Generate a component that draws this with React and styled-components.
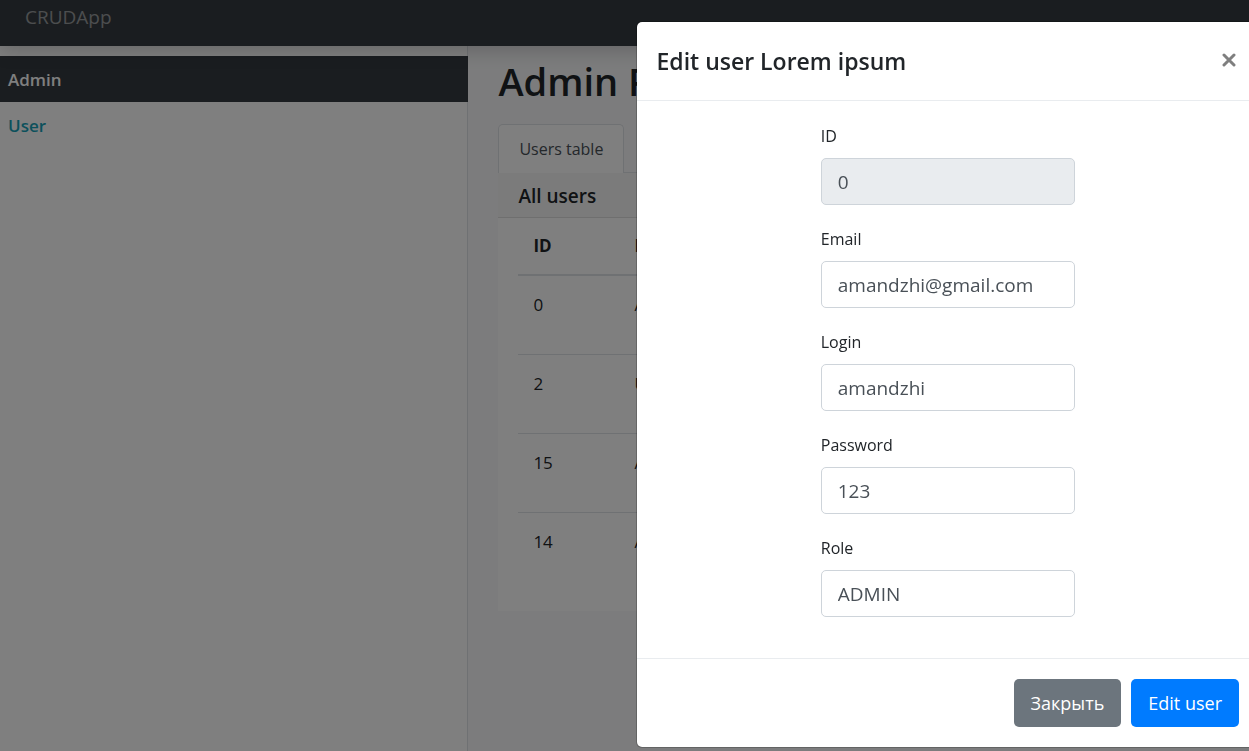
import React from "react";
import styled, { createGlobalStyle } from "styled-components";

const GlobalStyle = createGlobalStyle`
  *, *::before, *::after { box-sizing: border-box; }
  body {
    margin: 0;
    background: #f8f9fa;
    color: #212529;
    font-family: "Open Sans", "Noto Sans", sans-serif;
    font-size: 17px;
    line-height: 28px;
    overflow: hidden;
  }
  h1, h2, h3 { margin: 0; font-weight: 600; }
  button, input { font: inherit; }
`;

const Page = styled.div`
  min-height: 100vh;
  display: flex;
  flex-direction: column;
`;

const Navbar = styled.header`
  position: relative;
  height: 46px;
  padding: 2px 25px;
  background: #343a40;
  box-shadow: 0 4px 20px rgba(0, 0, 0, 0.2);
`;

const Brand = styled.a`
  color: rgba(255, 255, 255, 0.5);
  font-size: 19px;
  line-height: 30px;
  text-decoration: none;
`;

const Columns = styled.div`
  flex: 1;
  display: grid;
  grid-template-columns: 3fr 5fr;
`;

const Sidebar = styled.nav`
  padding-top: 10px;
  background: #fff;
  border-right: 1px solid #dee2e6;
`;

const SideLink = styled.a`
  display: block;
  margin-right: -1px;
  padding: 10px 8px 8px;
  font-weight: 600;
  text-decoration: none;
  color: ${(p) => (p.$active ? "#fff" : "#17a2b8")};
  background: ${(p) => (p.$active ? "#343a40" : "transparent")};
`;

const Main = styled.main`
  padding: 9px 30px;
  min-width: 0;
`;

const Title = styled.h1`
  font-size: 38px;
  line-height: 52px;
`;

const Tabs = styled.div`
  display: flex;
  margin-top: 17px;
  border-bottom: 1px solid #dee2e6;
`;

const Tab = styled.button`
  margin-bottom: -1px;
  padding: 10px 20px;
  border: 1px solid #dee2e6;
  border-bottom: 0;
  border-radius: 5px 5px 0 0;
  background: #fff;
  color: #495057;
  font-size: 16px;
`;

const CardHeader = styled.h2`
  padding: 9px 20px 7px;
  border-bottom: 1px solid #dfdfdf;
  background: #f7f7f7;
  font-size: 19px;
`;

const Card = styled.div`
  padding: 0 20px 20px;
  background: #fff;
`;

const Table = styled.table`
  width: 100%;
  border-collapse: collapse;
  table-layout: fixed;
  text-align: left;

  th { height: 57px; padding: 0 15px; border-bottom: 2px solid #dee2e6; font-weight: 700; }
  td { height: 79px; padding: 15px; border-top: 1px solid #dee2e6; vertical-align: top; }
`;

const Backdrop = styled.div`
  position: fixed;
  inset: 0;
  display: flex;
  justify-content: flex-end;
  align-items: flex-start;
  padding-top: 21px;
  overflow: hidden;
  background: rgba(0, 0, 0, 0.5);
`;

const Dialog = styled.section`
  width: 50%;
  margin-right: -11px;
  border: 1px solid rgba(0, 0, 0, 0.2);
  border-radius: 6px;
  background: #fff;
  background-clip: padding-box;
`;

const DialogHeader = styled.header`
  display: flex;
  justify-content: space-between;
  align-items: flex-start;
  padding: 20px;
  border-bottom: 1px solid #e9ecef;
`;

const DialogTitle = styled.h2`
  font-size: 23px;
  line-height: 38px;
`;

const Close = styled.button`
  display: flex;
  padding: 11px 3px;
  border: 0;
  background: transparent;
  color: #7f7f7f;
`;

const Form = styled.form`
  display: flex;
  flex-direction: column;
  gap: 20px;
  width: 254px;
  margin: 0 auto;
  padding: 21px 0 41px;
`;

const Label = styled.label`
  display: block;
  font-size: 16px;
  color: #212529;
`;

const Input = styled.input`
  display: block;
  width: 100%;
  height: 47px;
  margin-top: 8px;
  padding: 8px 16px;
  border: 1px solid #ced4da;
  border-radius: 5px;
  background: #fff;
  color: #495057;
  font-size: 19px;
  &:disabled { background: #e9ecef; }
`;

const Field = styled.div`
  min-height: 83px;
`;

const DialogFooter = styled.footer`
  display: flex;
  justify-content: flex-end;
  gap: 10px;
  padding: 20px;
  border-top: 1px solid #e9ecef;
`;

const Button = styled.button`
  height: 48px;
  padding: 0 17px;
  border: 0;
  border-radius: 5px;
  color: #fff;
  background: ${(p) => (p.$primary ? "#007bff" : "#6c757d")};
  font-size: 18px;
`;

const users = [
  [0, "ADMIN"],
  [2, "USER"],
  [15, "ADMIN"],
  [14, "ADMIN"],
];

const fields = [
  { id: "id", label: "ID", value: "0", disabled: true },
  { id: "email", label: "Email", value: "amandzhi@gmail.com" },
  { id: "login", label: "Login", value: "amandzhi" },
  { id: "password", label: "Password", value: "123" },
  { id: "role", label: "Role", value: "ADMIN" },
];

export default function App() {
  return (
    <>
      <GlobalStyle />
      <Page>
        <Navbar>
          <Brand href="#">CRUDApp</Brand>
        </Navbar>
        <Columns>
          <Sidebar>
            <SideLink href="#admin" $active>Admin</SideLink>
            <SideLink href="#user">User</SideLink>
          </Sidebar>
          <Main>
            <Title>Admin Panel</Title>
            <Tabs>
              <Tab type="button">Users table</Tab>
            </Tabs>
            <CardHeader>All users</CardHeader>
            <Card>
              <Table>
                <colgroup>
                  <col width="101" />
                  <col />
                </colgroup>
                <thead>
                  <tr><th>ID</th><th>Role</th></tr>
                </thead>
                <tbody>
                  {users.map(([id, role]) => (
                    <tr key={id}><td>{id}</td><td>{role}</td></tr>
                  ))}
                </tbody>
              </Table>
            </Card>
          </Main>
        </Columns>
      </Page>
      <Backdrop>
        <Dialog role="dialog" aria-labelledby="dialog-title">
          <DialogHeader>
            <DialogTitle id="dialog-title">Edit user Lorem ipsum</DialogTitle>
            <Close type="button" aria-label="Close">
              <svg width="14" height="14" viewBox="0 0 14 14" stroke="currentColor" strokeWidth="3" strokeLinecap="round">
                <path d="M2 2 12 12M12 2 2 12" />
              </svg>
            </Close>
          </DialogHeader>
          <Form id="edit-user">
            {fields.map((f) => (
              <Field key={f.id}>
                <Label htmlFor={f.id}>{f.label}</Label>
                <Input id={f.id} defaultValue={f.value} disabled={f.disabled} />
              </Field>
            ))}
          </Form>
          <DialogFooter>
            <Button type="button">Закрыть</Button>
            <Button type="submit" form="edit-user" $primary>Edit user</Button>
          </DialogFooter>
        </Dialog>
      </Backdrop>
    </>
  );
}
